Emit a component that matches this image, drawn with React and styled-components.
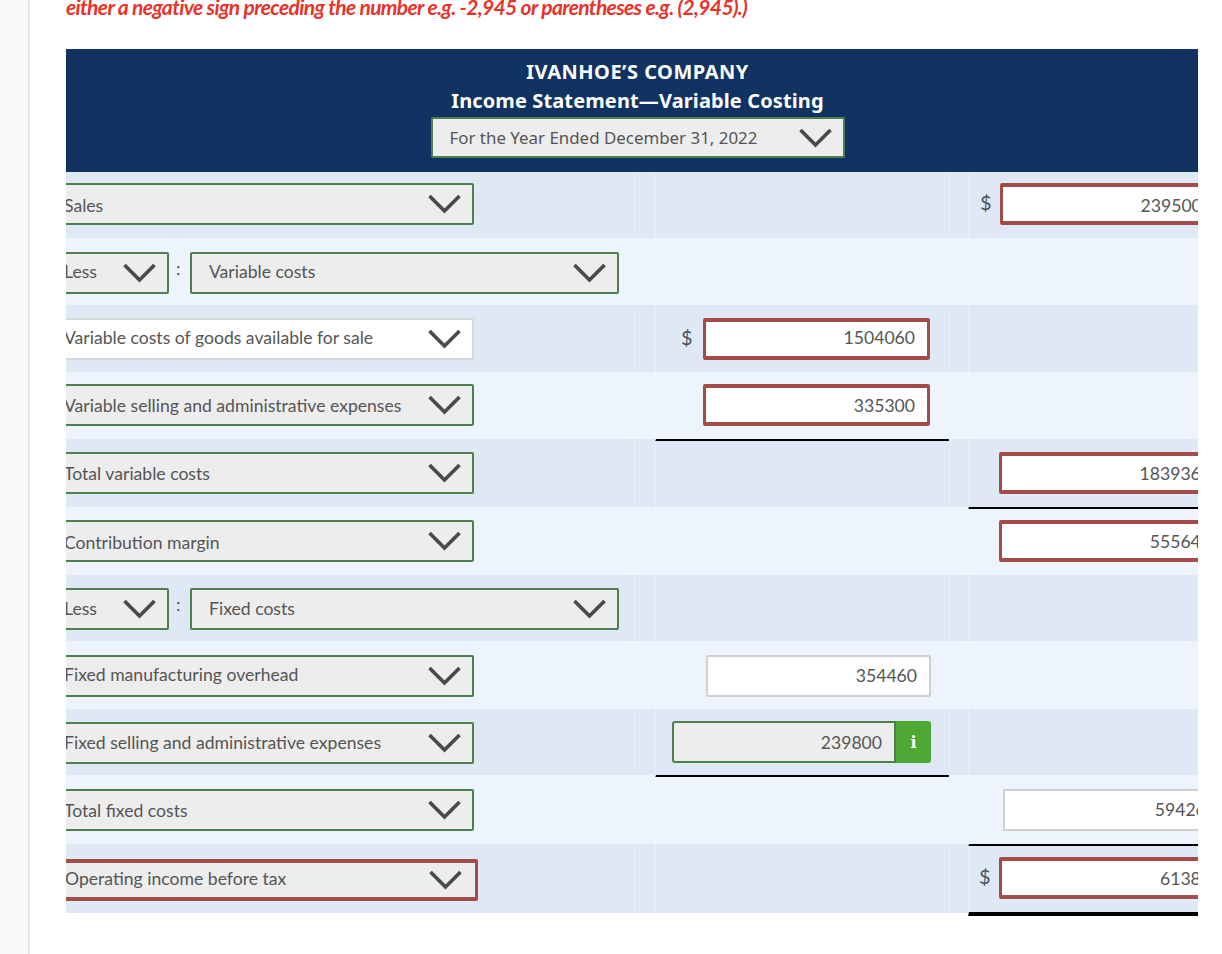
import React from 'react';
import styled, { createGlobalStyle } from 'styled-components';

const GlobalStyle = createGlobalStyle`
  html, body {
    margin: 0;
    padding: 0;
    background: #fff;
    overflow: hidden;
  }
  body {
    font-family: 'Lato', 'Liberation Sans', sans-serif;
    color: #4d4d4d;
  }
`;

const Page = styled.div`
  display: flex;
  height: 954px;
  overflow: hidden;
`;

const Rail = styled.div`
  flex: 0 0 28px;
  background: #f9f9f9;
  border-right: 2px solid #e6e6e6;
`;

const Main = styled.div`
  width: 1132px;
  margin-left: 36px;
  overflow: hidden;
  padding-bottom: 6px;
`;

const Warning = styled.p`
  margin: -6px 0 29px;
  height: 26px;
  font-size: 21px;
  line-height: 26px;
  font-style: italic;
  font-weight: 700;
  letter-spacing: -0.65px;
  color: #e8322a;
  white-space: nowrap;
`;

const Header = styled.div`
  height: 123px;
  box-sizing: border-box;
  padding: 8px 0 0 11px;
  background: #103361;
  display: flex;
  flex-direction: column;
  align-items: center;
  color: #fff;
  font-family: 'Noto Sans', 'DejaVu Sans', sans-serif;
  font-weight: 700;
  font-size: 20px;
`;

const Title = styled.div`
  height: 29px;
  line-height: 29px;
  letter-spacing: ${p => p.$ls}px;
  white-space: nowrap;
`;

const Row = styled.div`
  display: grid;
  grid-template-columns: 568px 21px 294px 19px 294px;
  width: 1196px;
  height: ${p => p.$h}px;
  background: ${p => (p.$light ? '#edf4fe' : '#dfe9f5')};
`;

// the rule under a subtotal hangs below the row, thick one starts 1px higher
const overhang = rule => (rule > 2 ? rule - 1 : rule);

const Cell = styled.div`
  display: flex;
  align-items: flex-start;
  box-sizing: border-box;
  padding-top: ${p => p.$top}px;
  padding-left: ${p => p.$indent || 0}px;
  border-left: 1px solid rgba(255, 255, 255, 0.28);
  border-bottom: ${p => (p.$rule ? `${p.$rule}px solid #000` : 'none')};
  margin-bottom: ${p => (p.$rule ? -overhang(p.$rule) : 0)}px;
  height: ${p => (p.$rule ? `calc(100% + ${overhang(p.$rule)}px)` : 'auto')};
`;

const LabelCell = styled(Cell)`
  border-left: none;
`;

const Select = styled.div`
  display: flex;
  align-items: center;
  justify-content: space-between;
  flex: 0 0 auto;
  box-sizing: border-box;
  width: ${p => p.$w}px;
  height: ${p => p.$hgt || 42}px;
  margin-left: ${p => p.$ml || 0}px;
  padding: 0 ${p => (p.$error ? 13 : 11)}px 0 ${p => p.$pl || 17}px;
  background: ${p => (p.$white ? '#fff' : '#ededed')};
  border-style: solid;
  border-width: ${p => (p.$error ? '4px 3px' : '2px')};
  border-color: ${p => (p.$error ? '#a34c4a' : p.$white ? '#d3dbd6' : '#4f7f4f')};
  border-radius: 2px;
  font-size: 17.6px;
  line-height: 24px;
  color: #555;
  white-space: nowrap;
`;

const HeaderSelect = styled(Select)`
  margin-top: 2px;
  font-family: 'Noto Sans', 'DejaVu Sans', sans-serif;
  font-weight: 400;
  font-size: 16.9px;
`;

const Text = styled.span`
  margin-top: ${p => (p.$dy || 0) * 2}px;
`;

const Colon = styled.span`
  flex: 0 0 21px;
  box-sizing: border-box;
  padding-left: 7px;
  font-size: 18px;
  line-height: 32px;
  color: #555;
`;

const Dollar = styled.span`
  flex: 0 0 ${p => p.$w}px;
  font-size: 20px;
  line-height: 38px;
  color: #4a5560;
`;

const Amount = styled.div`
  flex: 0 0 auto;
  box-sizing: border-box;
  width: ${p => p.$w}px;
  height: 42px;
  padding: 0 12px 0 0;
  display: flex;
  align-items: center;
  justify-content: flex-end;
  font-size: 17.6px;
  background: ${p => (p.$kind === 'ok' ? '#ededed' : '#fff')};
  color: #555;
  border-style: solid;
  border-width: ${p => (p.$kind === 'error' ? '4px 3px' : '2px')};
  border-color: ${p => (p.$kind === 'error' ? '#a34c4a' : p.$kind === 'ok' ? '#4f7f4f' : '#d0d0d0')};
  border-radius: ${p => (p.$kind === 'ok' ? '3px 0 0 3px' : '2px')};
`;

const InfoBadge = styled.div`
  flex: 0 0 35px;
  height: 42px;
  display: flex;
  align-items: center;
  justify-content: center;
  background: #4da733;
  border-radius: 0 3px 3px 0;
  color: #fff;
  font-family: 'DejaVu Serif', serif;
  font-weight: 700;
  font-size: 16px;
`;

const Arrow = styled.svg`
  flex: 0 0 auto;
`;

const Chevron = () => (
  <Arrow width="33" height="20" viewBox="0 0 33 20">
    <polyline points="1.5,2 16.5,17 31.5,2" fill="none" stroke="#4a4a4a" strokeWidth="3.6" />
  </Arrow>
);

const rows = [
  { h: 66, top: 11, dy: 2, label: 'Sales', col5: { dollar: 20, indent: 11, v: '2395000', kind: 'error', dy: 1 } },
  { h: 67, top: 14, dy: -1, less: 'Variable costs' },
  { h: 67, top: 13, dy: -1, label: 'Variable costs of goods available for sale', white: true, col3: { dollar: 22, indent: 25, v: '1504060', kind: 'error', dy: -2 } },
  { h: 67, top: 12, dy: 1, label: 'Variable selling and administrative expenses', col3: { indent: 47, v: '335300', kind: 'error', rule: 2 } },
  { h: 68, top: 13, dy: 1, label: 'Total variable costs', col5: { indent: 30, v: '1839360', kind: 'error', rule: 2 } },
  { h: 68, top: 13, dy: 2, label: 'Contribution margin', col5: { indent: 30, v: '555640', kind: 'error' } },
  { h: 66, top: 13, less: 'Fixed costs' },
  { h: 68, top: 14, dy: -1, label: 'Fixed manufacturing overhead', col3: { indent: 50, v: '354460', kind: 'plain', w: 225, dy: -1 } },
  { h: 66, top: 13, label: 'Fixed selling and administrative expenses', amountTop: 12, col3: { indent: 16, v: '239800', kind: 'ok', w: 224, info: true, rule: 2 } },
  { h: 69, top: 14, dy: 1, label: 'Total fixed costs', col5: { indent: 34, v: '594260', kind: 'plain', rule: 2, dy: -1 } },
  { h: 69, top: 15, dy: -1, label: 'Operating income before tax', error: true, amountTop: 13, col5: { dollar: 20, indent: 10, v: '61380', kind: 'error', rule: 4 } },
];

const AmountCell = ({ data, top }) => {
  if (!data) return <Cell />;
  return (
    <Cell $top={top} $rule={data.rule} $indent={data.indent}>
      {data.dollar && <Dollar $w={data.dollar}>$</Dollar>}
      <Amount $w={data.w || 227} $kind={data.kind}><Text $dy={data.dy}>{data.v}</Text></Amount>
      {data.info && <InfoBadge>i</InfoBadge>}
    </Cell>
  );
};

const App = () => (
  <Page>
    <GlobalStyle />
    <Rail />
    <Main>
      <Warning>either a negative sign preceding the number e.g. -2,945 or parentheses e.g. (2,945).)</Warning>
      <Header>
        <Title $ls={0.5}>IVANHOE’S COMPANY</Title>
        <Title $ls={0.12}>Income Statement—Variable Costing</Title>
        <HeaderSelect $w={414} $hgt={41}>
          For the Year Ended December 31, 2022
          <Chevron />
        </HeaderSelect>
      </Header>
      {rows.map((r, i) => (
        <Row key={i} $h={r.h} $light={i % 2 === 1}>
          <LabelCell $top={r.top}>
            {r.less ? (
              <>
                <Select $w={123} $ml={-20} $pl={16}><Text $dy={r.dy}>Less</Text><Chevron /></Select>
                <Colon>:</Colon>
                <Select $w={429}><Text $dy={r.dy}>{r.less}</Text><Chevron /></Select>
              </>
            ) : (
              <Select $w={r.error ? 432 : 428} $ml={-20} $pl={16} $white={r.white} $error={r.error}>
                <Text $dy={r.dy}>{r.label}</Text>
                <Chevron />
              </Select>
            )}
          </LabelCell>
          <Cell />
          <AmountCell data={r.col3} top={r.amountTop || r.top} />
          <Cell />
          <AmountCell data={r.col5} top={r.amountTop || r.top} />
        </Row>
      ))}
    </Main>
  </Page>
);

export default App;
